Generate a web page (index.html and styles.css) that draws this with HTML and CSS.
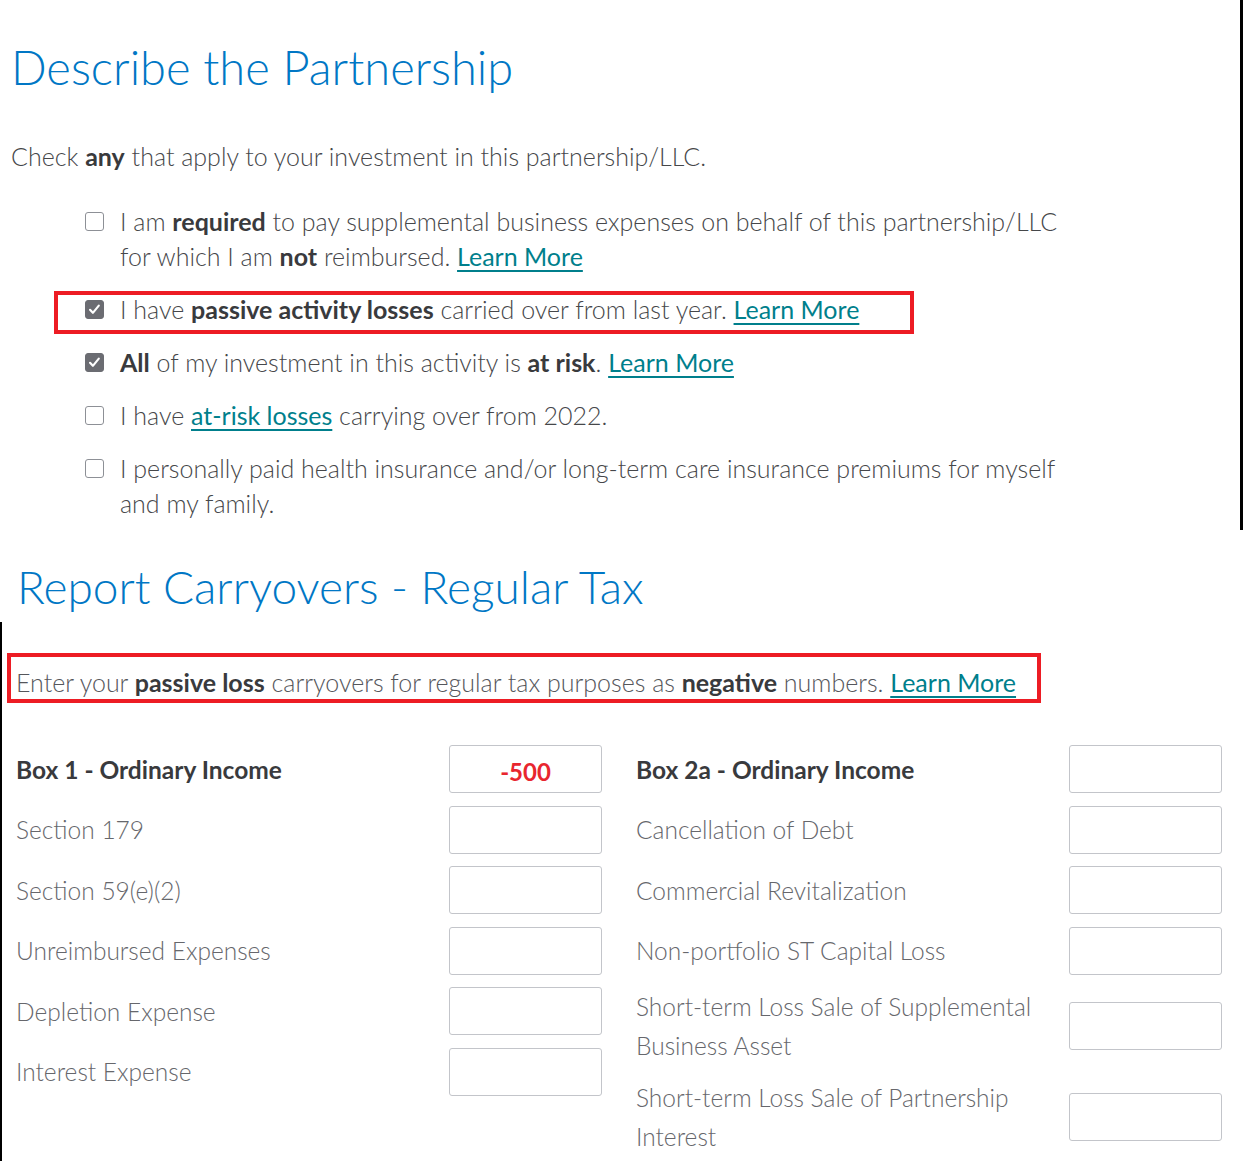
FILE: index.html
```html
<!DOCTYPE html>
<html lang="en">
<head>
  <meta charset="UTF-8" />
  <title>Describe the Partnership</title>
  <meta name="viewport" content="width=device-width, initial-scale=1.0"/>
  <link rel="stylesheet" href="styles.css">
</head>
<body>

  <section class="describe">
    <h1>Describe the Partnership</h1>
    <p class="lead">Check <b>any</b> that apply to your investment in this partnership/LLC.</p>

    <ul class="options">
      <li>
        <span class="box"></span>
        <span class="text">I am <b>required</b> to pay supplemental business expenses on behalf of this partnership/LLC for which I am <b>not</b> reimbursed. <a href="#">Learn More</a></span>
      </li>
      <li class="marked">
        <span class="box checked"></span>
        <span class="text">I have <b>passive activity losses</b> carried over from last year. <a href="#">Learn More</a></span>
      </li>
      <li>
        <span class="box checked"></span>
        <span class="text"><b>All</b> of my investment in this activity is <b>at risk</b>. <a href="#">Learn More</a></span>
      </li>
      <li>
        <span class="box"></span>
        <span class="text">I have <a href="#">at-risk losses</a> carrying over from 2022.</span>
      </li>
      <li>
        <span class="box"></span>
        <span class="text">I personally paid health insurance and/or long-term care insurance premiums for myself and my family.</span>
      </li>
    </ul>
  </section>

  <section class="carryovers">
    <h1>Report Carryovers - Regular Tax</h1>

    <div class="sheet">
      <p class="lead marked">Enter your <b>passive loss</b> carryovers for regular tax purposes as <b>negative</b> numbers. <a href="#">Learn More</a></p>

      <div class="fields">
        <div class="col">
          <div class="field"><label class="strong">Box 1 - Ordinary Income</label><input class="amount neg" value="-500"></div>
          <div class="field"><label>Section 179</label><input class="amount"></div>
          <div class="field"><label>Section 59(e)(2)</label><input class="amount"></div>
          <div class="field"><label>Unreimbursed Expenses</label><input class="amount"></div>
          <div class="field"><label>Depletion Expense</label><input class="amount"></div>
          <div class="field"><label>Interest Expense</label><input class="amount"></div>
        </div>
        <div class="col">
          <div class="field"><label class="strong">Box 2a - Ordinary Income</label><input class="amount"></div>
          <div class="field"><label>Cancellation of Debt</label><input class="amount"></div>
          <div class="field"><label>Commercial Revitalization</label><input class="amount"></div>
          <div class="field"><label>Non-portfolio ST Capital Loss</label><input class="amount"></div>
          <div class="field"><label>Short-term Loss Sale of Supplemental Business Asset</label><input class="amount"></div>
          <div class="field"><label>Short-term Loss Sale of Partnership Interest</label><input class="amount"></div>
        </div>
      </div>
    </div>
  </section>

</body>
</html>
```
FILE: styles.css
```css
body {
  margin: 0;
  font-family: Lato, "Open Sans", sans-serif;
  font-weight: 300;
  color: #46474a;
  background: #fff;
}
h1 {
  margin: 0;
  font-size: 47px;
  font-weight: 300;
  line-height: 1.2;
  color: #0077c5;
}
b {
  font-weight: 700;
  color: #393a3d;
}
a {
  color: #007f8c;
  font-weight: 400;
  text-decoration: underline;
  text-decoration-thickness: 2px;
  text-underline-offset: 4px;
}
.lead {
  margin: 0;
  font-size: 25px;
  line-height: 35px;
}

/* top panel */
.describe {
  height: 530px;
  box-sizing: border-box;
  padding: 39px 0 0 11px;
  border-right: 3px solid #000;
}
.describe .lead {
  margin-top: 44px;
}
.options {
  list-style: none;
  margin: 30px 0 0;
  padding: 0 0 0 74px;
  max-width: 990px;
  display: flex;
  flex-direction: column;
  gap: 18px;
  font-size: 25px;
  line-height: 35px;
}
.options li {
  display: flex;
  gap: 16px;
  align-items: flex-start;
}
.box {
  flex: none;
  width: 19px;
  height: 19px;
  margin-top: 8px;
  box-sizing: border-box;
  border: 1.5px solid #8d9096;
  border-radius: 3px;
  background: #fff;
}
.box.checked {
  border-color: #6b6c72;
  background: #6b6c72 url("data:image/svg+xml,%3Csvg xmlns='http://www.w3.org/2000/svg' viewBox='0 0 19 19'%3E%3Cpath d='M4.5 9.8l3.2 3.4 6.6-8' fill='none' stroke='%23fff' stroke-width='2.4' stroke-linecap='round' stroke-linejoin='round'/%3E%3C/svg%3E") center / 100% no-repeat;
}

/* red call-out frames */
.marked {
  position: relative;
}
.options .marked {
  width: fit-content;
}
.options .marked::after {
  content: "";
  position: absolute;
  left: -31px;
  right: -55px;
  top: -1px;
  bottom: -7px;
  border: 4px solid #ed1c24;
  pointer-events: none;
}
.sheet .marked::after {
  content: "";
  position: absolute;
  left: -9px;
  width: 1034px;
  top: -12px;
  bottom: -3px;
  box-sizing: border-box;
  border: 4px solid #ed1c24;
  pointer-events: none;
}

/* bottom panel */
.carryovers h1 {
  margin: 29px 0 0 17px;
  font-size: 46px;
}
.sheet {
  margin-top: 8px;
  min-height: 539px;
  box-sizing: border-box;
  padding: 43px 0 0 14px;
  border-left: 2px solid #000;
}
.sheet .lead {
  color: #55565b;
}
.fields {
  display: grid;
  grid-template-columns: 586px 586px;
  column-gap: 34px;
  margin-top: 45px;
}
.col {
  display: flex;
  flex-direction: column;
  gap: 12.5px;
}
.field {
  display: grid;
  grid-template-columns: 433px 153px;
  align-items: center;
  min-height: 48px;
}
.field label {
  font-size: 24.5px;
  line-height: 39px;
  color: #66676c;
}
.field label.strong {
  font-weight: 700;
  color: #393a3d;
}
.amount {
  width: 153px;
  height: 48px;
  box-sizing: border-box;
  border: 1px solid #c3c5ca;
  border-radius: 3px;
  padding: 4px 8px 0;
  font: 700 24px Lato, sans-serif;
  text-align: center;
  color: #393a3d;
}
.amount.neg {
  color: #e8262e;
}
```
